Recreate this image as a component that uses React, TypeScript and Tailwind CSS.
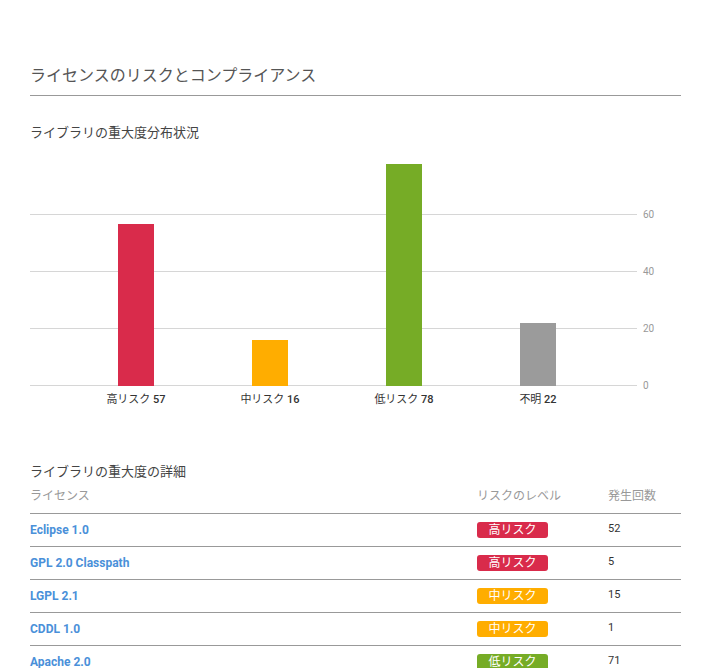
import React from 'react';

const bars = [
  { label: '高リスク', n: 57, color: 'bg-[#d92b4b]' },
  { label: '中リスク', n: 16, color: 'bg-[#ffad00]' },
  { label: '低リスク', n: 78, color: 'bg-[#76ac26]' },
  { label: '不明', n: 22, color: 'bg-[#9b9b9b]' },
];

const rows = [
  { name: 'Eclipse 1.0', risk: '高リスク', color: 'bg-[#d92b4b]', n: 52 },
  { name: 'GPL 2.0 Classpath', risk: '高リスク', color: 'bg-[#d92b4b]', n: 5 },
  { name: 'LGPL 2.1', risk: '中リスク', color: 'bg-[#ffad00]', n: 15 },
  { name: 'CDDL 1.0', risk: '中リスク', color: 'bg-[#ffad00]', n: 1 },
  { name: 'Apache 2.0', risk: '低リスク', color: 'bg-[#76ac26]', n: 71 },
];

const PX = 2.85;

export default function App() {
  return (
    <div
      className="h-[668px] overflow-hidden bg-white px-[30px] pt-[63px] text-[#444]"
      style={{ fontFamily: 'Roboto, "Noto Sans CJK JP", sans-serif' }}
    >
      <h1 className="border-b border-[#999] pb-[7px] text-[16px] leading-[25px] text-[#555]">
        ライセンスのリスクとコンプライアンス
      </h1>
      <h2 className="mt-[28px] text-[13px] leading-[18px]">ライブラリの重大度分布状況</h2>

      <div className="mt-[12px] flex">
        <div className="relative h-[232px] flex-1">
          {[0, 20, 40, 60].map((v) => (
            <div
              key={v}
              className="absolute left-0 right-0 border-t border-[#d6d6d6]"
              style={{ top: 231 - v * PX }}
            />
          ))}
          <div className="relative flex h-full items-end pl-[39px] pr-[32px]">
            {bars.map((b) => (
              <div key={b.label} className="flex flex-1 justify-center">
                <div className={`w-[36px] ${b.color}`} style={{ height: b.n * PX }} />
              </div>
            ))}
          </div>
        </div>
        <div className="relative w-[44px]">
          {[0, 20, 40, 60].map((v) => (
            <span
              key={v}
              className="absolute left-[6px] -translate-y-1/2 text-[10px] text-[#999]"
              style={{ top: 231 - v * PX }}
            >
              {v}
            </span>
          ))}
        </div>
      </div>
      <div className="mr-[44px] mt-[6px] flex pl-[39px] pr-[32px] text-[11px] text-[#333]">
        {bars.map((b) => (
          <div key={b.label} className="flex-1 text-center">
            {b.label} <span className="font-medium">{b.n}</span>
          </div>
        ))}
      </div>

      <h2 className="mt-[54px] text-[13px] leading-[18px]">ライブラリの重大度の詳細</h2>
      <div className="mt-[6px] flex border-b border-[#999] pb-[8px] text-[12px] text-[#999]">
        <div className="w-[447px]">ライセンス</div>
        <div className="w-[131px]">リスクのレベル</div>
        <div>発生回数</div>
      </div>
      {rows.map((r) => (
        <div key={r.name} className="flex h-[33px] items-center border-b border-[#999]">
          <div className="w-[447px] text-[12px] font-bold text-[#4a90d9]">{r.name}</div>
          <div className="w-[131px]">
            <span className={`flex h-[16px] w-[71px] items-center justify-center rounded-[3px] text-[12px] text-white ${r.color}`}>
              {r.risk}
            </span>
          </div>
          <div className="text-[11px] text-[#333]">{r.n}</div>
        </div>
      ))}
    </div>
  );
}
